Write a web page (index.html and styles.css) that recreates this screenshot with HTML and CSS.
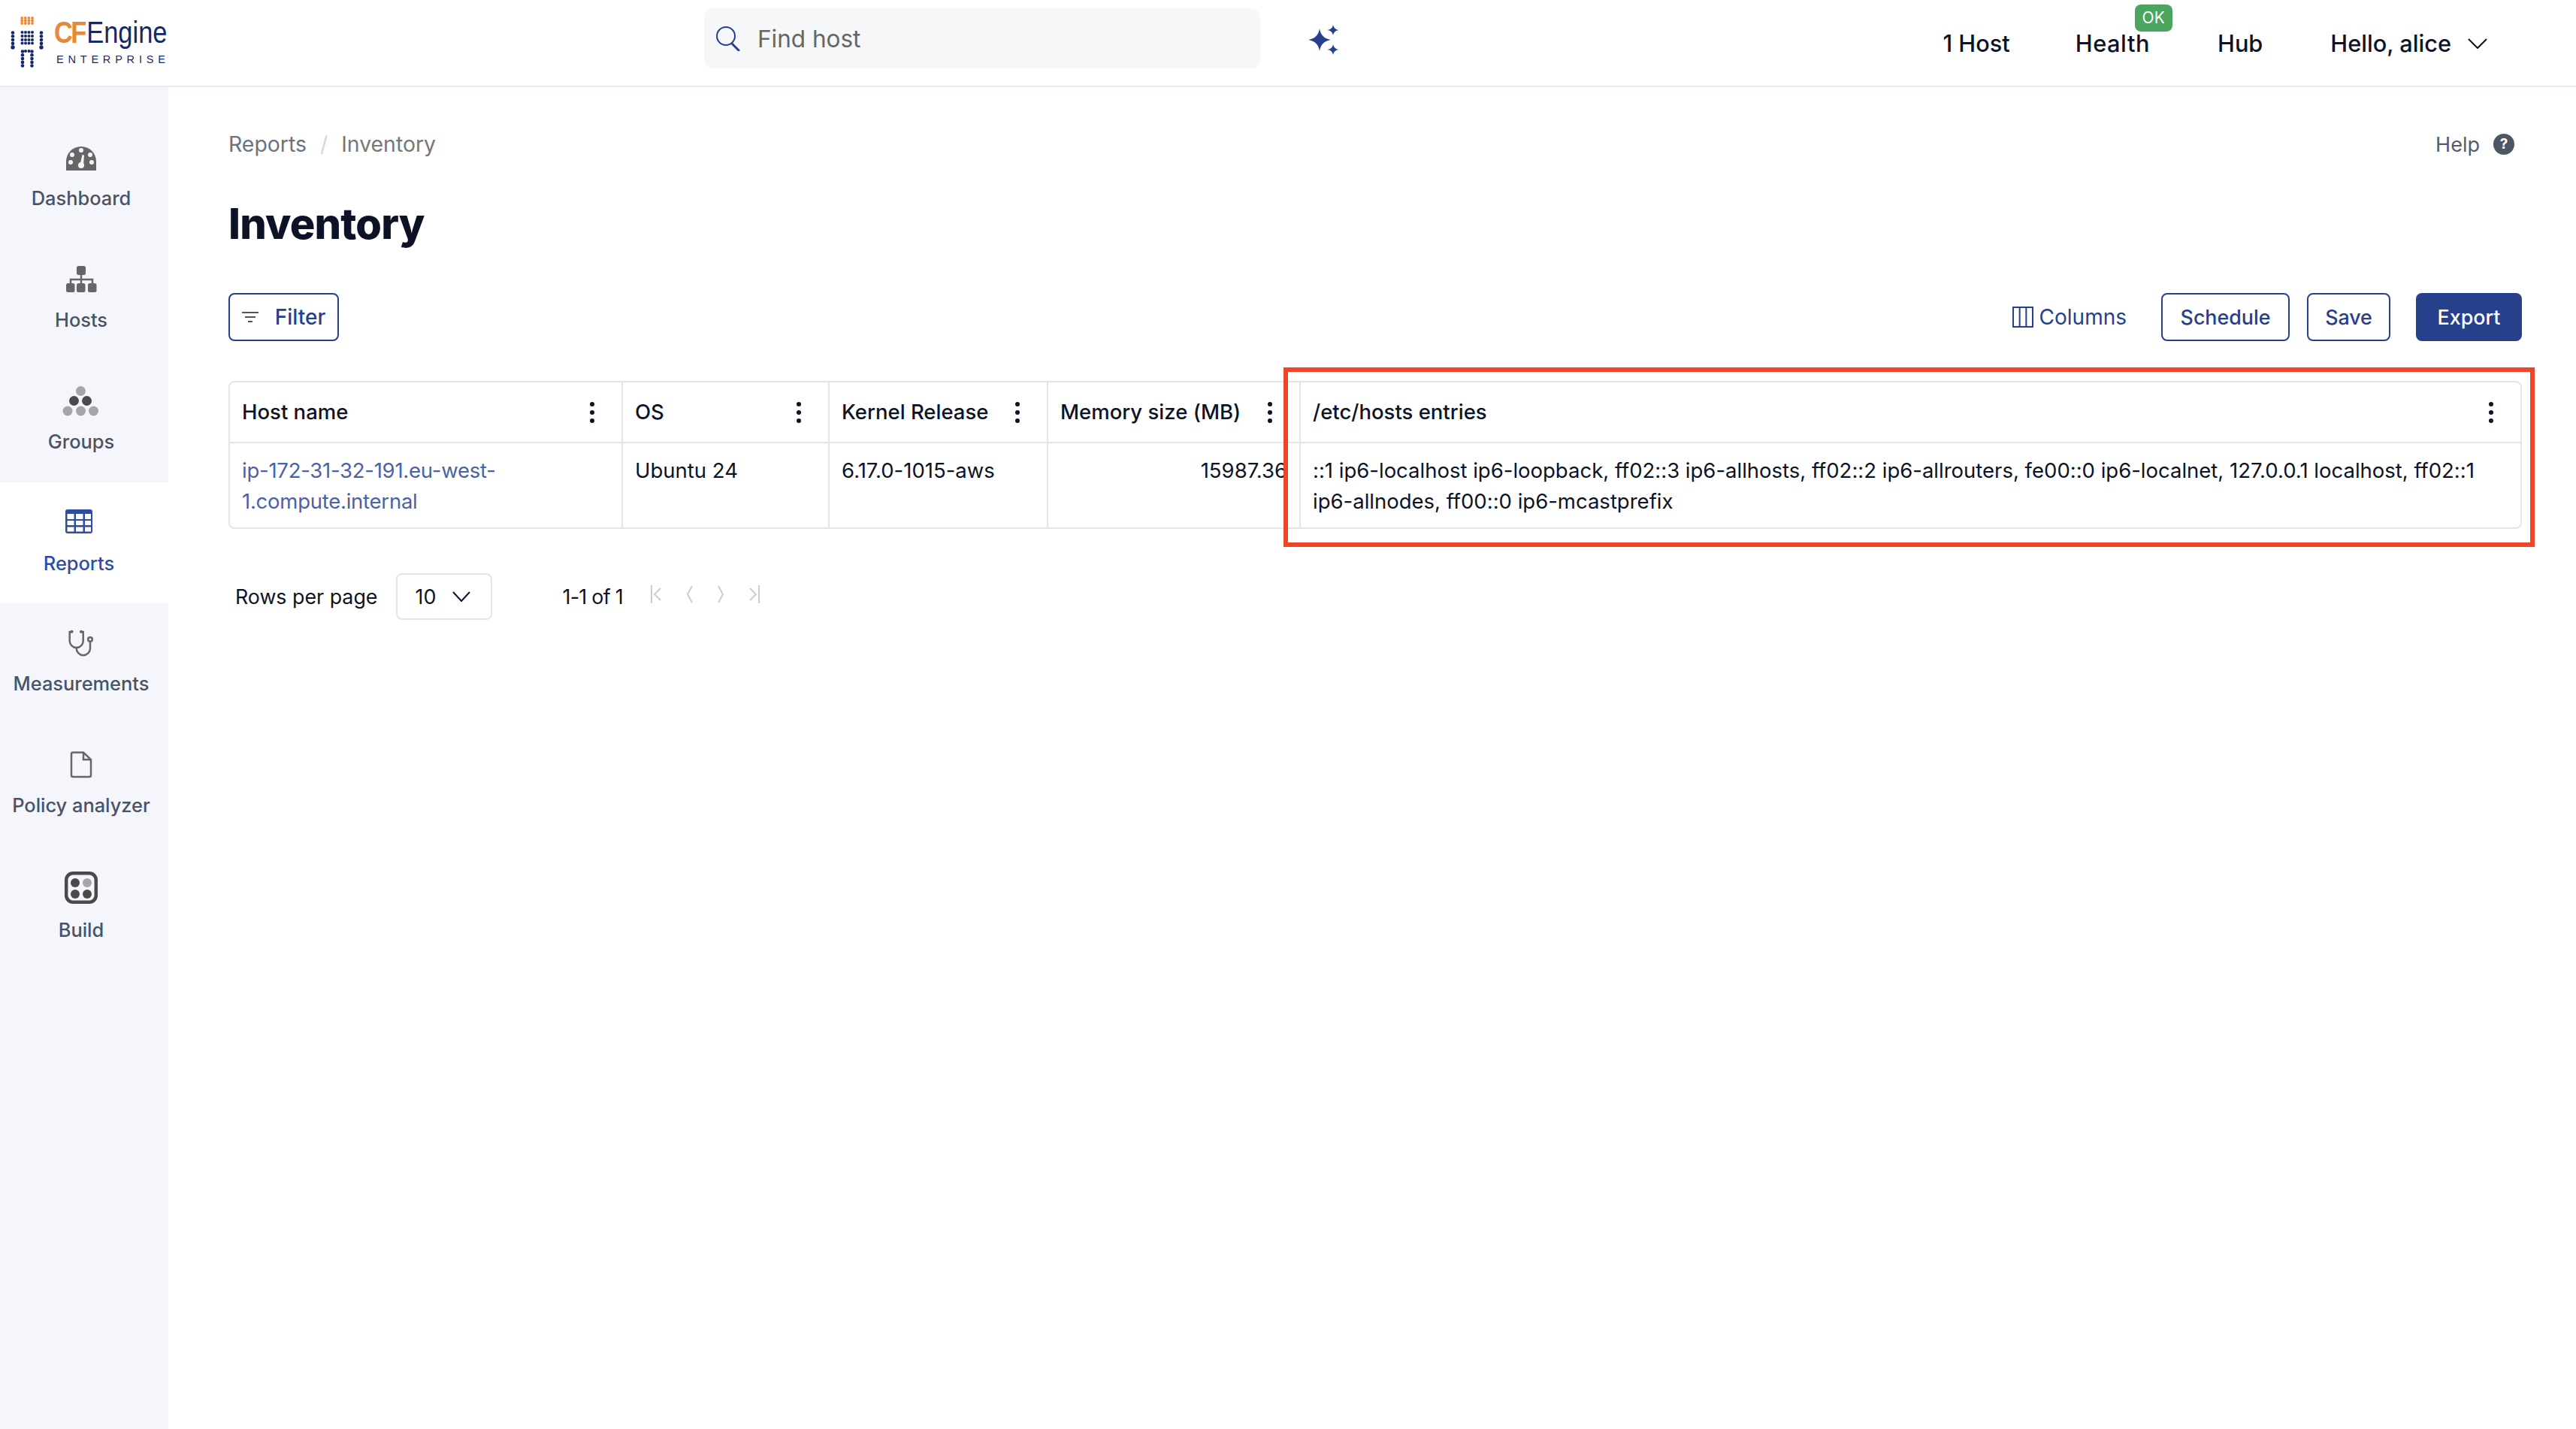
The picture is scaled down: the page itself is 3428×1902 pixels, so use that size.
FILE: index.html
```html
<!doctype html>
<html lang="en">
<head>
<meta charset="utf-8">
<title>Inventory</title>
<link rel="stylesheet" href="styles.css">
</head>
<body>
<div class="page">
  <header class="topbar">
    <div class="logo-wrap">
      <a class="logo">
        <svg class="logo-mark" viewBox="0 0 60 96" width="60" height="96">
          <g fill="#e8893a">
            <circle cx="15.200" cy="2" r="1.900"/><circle cx="19.800" cy="2" r="1.900"/><circle cx="24.400" cy="2" r="1.900"/><circle cx="29" cy="2" r="1.900"/>
            <circle cx="15.200" cy="5.500" r="1.900"/><circle cx="19.800" cy="5.500" r="1.900"/><circle cx="24.400" cy="5.500" r="1.900"/><circle cx="29" cy="5.500" r="1.900"/>
            <circle cx="15.200" cy="9" r="1.900"/><circle cx="19.800" cy="9" r="1.900"/><circle cx="24.400" cy="9" r="1.900"/><circle cx="29" cy="9" r="1.900"/>
          </g>
          <g fill="#14296b">
            <circle cx="3" cy="21.500" r="2.300"/><circle cx="3" cy="26.300" r="2.300"/><circle cx="3" cy="31.100" r="2.300"/><circle cx="3" cy="35.900" r="2.300"/><circle cx="3" cy="41" r="2.700"/>
            <circle cx="41" cy="21.500" r="2.300"/><circle cx="41" cy="26.300" r="2.300"/><circle cx="41" cy="31.100" r="2.300"/><circle cx="41" cy="35.900" r="2.300"/><circle cx="41" cy="41" r="2.700"/>
            <circle cx="15.500" cy="21" r="2"/><circle cx="20" cy="21" r="2"/><circle cx="24.500" cy="21" r="2"/><circle cx="29" cy="21" r="2"/>
            <circle cx="15.500" cy="26" r="2"/><circle cx="20" cy="26" r="2"/><circle cx="24.500" cy="26" r="2"/><circle cx="29" cy="26" r="2"/>
            <circle cx="15.500" cy="31" r="2"/><circle cx="20" cy="31" r="2"/><circle cx="24.500" cy="31" r="2"/><circle cx="29" cy="31" r="2"/>
            <circle cx="15.500" cy="35.500" r="2"/><circle cx="20" cy="35.500" r="2"/><circle cx="24.500" cy="35.500" r="2"/><circle cx="29" cy="35.500" r="2"/>
            <circle cx="20" cy="46" r="2"/><circle cx="24.500" cy="46" r="2"/>
            <circle cx="16" cy="46.500" r="2.300"/><circle cx="16" cy="51.300" r="2.300"/><circle cx="16" cy="56.100" r="2.300"/><circle cx="16" cy="60.900" r="2.300"/><circle cx="16" cy="65.500" r="2.300"/>
            <circle cx="28.500" cy="46.500" r="2.300"/><circle cx="28.500" cy="51.300" r="2.300"/><circle cx="28.500" cy="56.100" r="2.300"/><circle cx="28.500" cy="60.900" r="2.300"/><circle cx="28.500" cy="65.500" r="2.300"/>
          </g>
        </svg>
        <span class="logo-text">
          <span class="logo-name"><b class="logo-cf">CF</b>Engine</span>
          <span class="logo-sub">ENTERPRISE</span>
        </span>
      </a>
    </div>
    <div class="search">
      <svg class="search-icon" viewBox="0 0 34 34" width="34" height="34"><circle cx="14" cy="14" r="12" fill="none" stroke="#27408b" stroke-width="2"/><path d="M22 24l9 9" stroke="#27408b" stroke-width="3" stroke-linecap="round"/></svg>
      <span class="search-text">Find host</span>
    </div>
    <svg class="sparkle" viewBox="0 0 42 42" width="42" height="42" fill="#27408b">
      <path d="M16 6Q18 19 31 21 18 23 16 36 14 23 1 21 14 19 16 6Z"/>
      <path d="M34 1Q35 7 41.500 8 35 9 34 15 33 9 26.500 8 33 7 34 1Z"/>
      <path d="M34 27Q35 33 41.500 34 35 35 34 41 33 35 26.500 34 33 33 34 27Z"/>
    </svg>
    <nav class="topnav">
      <a class="topnav-item">1 Host</a>
      <a class="topnav-item topnav-health">Health<span class="badge-ok">OK</span></a>
      <a class="topnav-item">Hub</a>
      <a class="topnav-item topnav-user">Hello, alice
        <svg viewBox="0 0 26 14" width="26" height="14"><path d="M1 1l12 12L25 1" fill="none" stroke="#0d1326" stroke-width="2"/></svg>
      </a>
    </nav>
  </header>

  <div class="body-row">
    <aside class="sidebar">
      <a class="side-item">
        <svg class="side-icon" viewBox="0 0 64 48" width="64" height="48">
          <path d="M12 41V29a20 20 0 0 1 40 0V41Z" fill="#666"/>
          <g fill="#f4f6fb"><circle cx="32" cy="14" r="3"/><circle cx="20" cy="20" r="3"/><circle cx="44" cy="20" r="3"/><circle cx="18" cy="30" r="3"/><circle cx="46" cy="30" r="3"/><circle cx="32" cy="34" r="4"/><path d="M30.500 33L33.500 20 36 20.500 35 34Z"/></g>
        </svg>
        <span class="side-label">Dashboard</span>
      </a>
      <a class="side-item">
        <svg class="side-icon" viewBox="0 0 64 48" width="64" height="48">
          <g fill="#666"><rect x="26" y="6" width="12" height="12" rx="2.500"/><rect x="12" y="29" width="11.500" height="12" rx="2.500"/><rect x="26" y="29" width="11.500" height="12" rx="2.500"/><rect x="41" y="29" width="11.500" height="12" rx="2.500"/></g>
          <path d="M32 18V29M18 29V24H47V29" fill="none" stroke="#666" stroke-width="2.500"/>
        </svg>
        <span class="side-label">Hosts</span>
      </a>
      <a class="side-item">
        <svg class="side-icon" viewBox="0 0 64 48" width="64" height="48">
          <g fill="#a6a6a6"><circle cx="31.500" cy="10.500" r="6.500"/><circle cx="14" cy="37" r="6.500"/><circle cx="31.500" cy="37" r="6.500"/><circle cx="48.500" cy="37" r="6.500"/></g>
          <g fill="#4a4a4a"><circle cx="22.500" cy="23.500" r="6.500"/><circle cx="39.500" cy="23.500" r="6.500"/></g>
        </svg>
        <span class="side-label">Groups</span>
      </a>
      <a class="side-item side-item-active">
        <svg class="side-icon" viewBox="0 0 64 48" width="64" height="48">
          <rect x="14" y="6" width="36" height="32" rx="3" fill="#2e4da3"/>
          <g fill="#fff"><rect x="16.500" y="12" width="9" height="7"/><rect x="28" y="12" width="9.500" height="7"/><rect x="40" y="12" width="8" height="7"/><rect x="16.500" y="21" width="9" height="6"/><rect x="28" y="21" width="9.500" height="6"/><rect x="40" y="21" width="8" height="6"/><rect x="16.500" y="29.500" width="9" height="6"/><rect x="28" y="29.500" width="9.500" height="6"/><rect x="40" y="29.500" width="8" height="6"/></g>
        </svg>
        <span class="side-label">Reports</span>
      </a>
      <a class="side-item">
        <svg class="side-icon" viewBox="0 0 64 48" width="64" height="48">
          <g transform="translate(0 2)">
            <g fill="none" stroke="#666" stroke-width="2.500" stroke-linecap="round">
              <path d="M20 7H16.700V19a9 9 0 0 0 18 0V7H31.500"/>
              <path d="M25.700 28V29a9.150 9.150 0 0 0 18.300 0V20"/>
              <circle cx="44" cy="17" r="2.800"/>
            </g>
            <circle cx="19.500" cy="6.700" r="2" fill="#666"/><circle cx="32" cy="6.700" r="2" fill="#666"/>
          </g>
        </svg>
        <span class="side-label">Measurements</span>
      </a>
      <a class="side-item">
        <svg class="side-icon" viewBox="0 0 64 48" width="64" height="48">
          <path d="M21 7.500H35L45 17V38a2 2 0 0 1-2 2H21a2 2 0 0 1-2-2V9.500a2 2 0 0 1 2-2Z" fill="none" stroke="#666" stroke-width="2.500"/>
          <path d="M35 8V17H45" fill="none" stroke="#666" stroke-width="2.500"/>
        </svg>
        <span class="side-label">Policy analyzer</span>
      </a>
      <a class="side-item side-item-build">
        <svg class="side-icon" viewBox="0 0 64 48" width="64" height="48">
          <rect x="12.200" y="6.200" width="39.600" height="38.600" rx="9" fill="none" stroke="#4a4a4a" stroke-width="4.500"/>
          <circle cx="24" cy="19" r="6" fill="#4a4a4a"/><circle cx="40" cy="19" r="6" fill="#a6a6a6"/><circle cx="24" cy="34" r="6" fill="#4a4a4a"/><circle cx="40" cy="34" r="6" fill="#4a4a4a"/>
        </svg>
        <span class="side-label">Build</span>
      </a>
    </aside>

    <main class="main">
      <div class="crumb-row">
        <div class="crumbs"><a class="crumb-link">Reports</a><span class="crumb-sep">/</span><span class="crumb-current">Inventory</span></div>
        <a class="help">Help<span class="help-icon">?</span></a>
      </div>
      <h1 class="title">Inventory</h1>
      <div class="actions">
        <button class="btn btn-outline btn-filter">
          <svg viewBox="0 0 22 14" width="22" height="14"><path d="M0 1h22M4 7h14M8 13h6" stroke="#555" stroke-width="2"/></svg>
          Filter
        </button>
        <div class="actions-right">
          <a class="columns-link">
            <svg viewBox="0 0 28 28" width="28" height="28"><path d="M1 1h26v26H1ZM9.670 1v26M18.330 1v26" fill="none" stroke="#27408b" stroke-width="2"/></svg>
            Columns
          </a>
          <button class="btn btn-outline btn-schedule">Schedule</button>
          <button class="btn btn-outline btn-save">Save</button>
          <button class="btn btn-solid">Export</button>
        </div>
      </div>

      <table class="report">
        <colgroup>
          <col class="col-host"><col class="col-os"><col class="col-kernel"><col class="col-mem"><col class="col-etc">
        </colgroup>
        <thead>
          <tr>
            <th><div class="th-in">Host name<svg class="kebab" viewBox="0 0 6 28" width="6" height="28"><circle cx="3" cy="3" r="3"/><circle cx="3" cy="14" r="3"/><circle cx="3" cy="25" r="3"/></svg></div></th>
            <th><div class="th-in">OS<svg class="kebab" viewBox="0 0 6 28" width="6" height="28"><circle cx="3" cy="3" r="3"/><circle cx="3" cy="14" r="3"/><circle cx="3" cy="25" r="3"/></svg></div></th>
            <th><div class="th-in">Kernel Release<svg class="kebab" viewBox="0 0 6 28" width="6" height="28"><circle cx="3" cy="3" r="3"/><circle cx="3" cy="14" r="3"/><circle cx="3" cy="25" r="3"/></svg></div></th>
            <th><div class="th-in">Memory size (MB)<svg class="kebab" viewBox="0 0 6 28" width="6" height="28"><circle cx="3" cy="3" r="3"/><circle cx="3" cy="14" r="3"/><circle cx="3" cy="25" r="3"/></svg></div></th>
            <th><div class="th-in">/etc/hosts entries<svg class="kebab" viewBox="0 0 6 28" width="6" height="28"><circle cx="3" cy="3" r="3"/><circle cx="3" cy="14" r="3"/><circle cx="3" cy="25" r="3"/></svg></div></th>
          </tr>
        </thead>
        <tbody>
          <tr>
            <td><a class="host-link">ip-172-31-32-191.eu-west-1.compute.internal</a></td>
            <td>Ubuntu 24</td>
            <td>6.17.0-1015-aws</td>
            <td class="num">15987.36</td>
            <td>::1 ip6-localhost ip6-loopback, ff02::3 ip6-allhosts, ff02::2 ip6-allrouters, fe00::0 ip6-localnet, 127.0.0.1 localhost, ff02::1 ip6-allnodes, ff00::0 ip6-mcastprefix</td>
          </tr>
        </tbody>
      </table>

      <div class="pager">
        <span class="pager-label">Rows per page</span>
        <div class="select">10<svg viewBox="0 0 24 14" width="24" height="14"><path d="M1 1l11 12L23 1" fill="none" stroke="#0d1326" stroke-width="2"/></svg></div>
        <span class="pager-count">1-1 of 1</span>
        <div class="pager-icons">
          <svg viewBox="0 0 14 24" width="14" height="24"><path d="M1 0V24M13 4L5 12l8 8" fill="none" stroke="#ccc" stroke-width="2"/></svg>
          <svg viewBox="0 0 9 24" width="9" height="24"><path d="M8 1L2 12l6 11" fill="none" stroke="#ccc" stroke-width="2"/></svg>
          <svg viewBox="0 0 9 24" width="9" height="24"><path d="M1 1l6 11L1 23" fill="none" stroke="#ccc" stroke-width="2"/></svg>
          <svg viewBox="0 0 14 24" width="14" height="24"><path d="M13 0V24M1 4l8 8-8 8" fill="none" stroke="#ccc" stroke-width="2"/></svg>
        </div>
      </div>
    </main>
  </div>
  <div class="annotation"></div>
</div>
</body>
</html>
```
FILE: styles.css
```css
* { box-sizing: border-box; }
html, body { margin: 0; padding: 0; background: #fff; }
body { font-family: Inter, "Noto Sans", sans-serif; color: #0d1326; font-feature-settings: "calt" 0; }
.page { position: relative; width: 3428px; height: 1902px; overflow: hidden; display: flex; flex-direction: column; }

/* top bar */
.topbar { display: flex; align-items: flex-start; height: 116px; flex: none; border-bottom: 2px solid #e6eaf2; }
.logo-wrap { width: 937px; flex: none; }
.logo { display: flex; padding: 22px 0 0 14px; }
.logo-mark { flex: none; }
.logo-text { display: flex; flex-direction: column; margin: 1px 0 0 -2px; }
.logo-name { font-family: "Liberation Sans", sans-serif; font-size: 40px; line-height: 40px; color: #14296b; font-weight: 400; white-space: nowrap; transform: scaleX(.86); transform-origin: left center; }
.logo-cf { color: #e8893a; font-weight: 700; letter-spacing: -3px; margin-right: 3px; }
.logo-sub { font-size: 14.500px; line-height: 16px; letter-spacing: 5.800px; color: #14296b; margin: 8px 0 0 3px; font-family: "Liberation Sans", sans-serif; white-space: nowrap; }
.search { width: 740px; height: 80px; margin-top: 11px; background: #f6f7f9; border-radius: 12px; display: flex; align-items: center; padding-left: 15px; flex: none; }
.search-text { font-size: 31.500px; color: #666; margin-left: 22px; }
.sparkle { margin: 32px 0 0 63px; flex: none; }
.topnav { margin-left: auto; padding: 38px 118px 0 0; display: flex; gap: 90px; }
.topnav-item { font-size: 30.700px; line-height: 40px; font-weight: 500; position: relative; white-space: nowrap; }
.topnav-health { letter-spacing: .6px; margin-left: -3px; }
.topnav-user { display: flex; align-items: center; gap: 22px; }
.badge-ok { position: absolute; left: 79px; top: -32px; width: 50px; height: 36px; border-radius: 8px; background: #4ca55f; color: #fff; font-size: 21px; line-height: 36px; font-weight: 400; letter-spacing: 0; text-align: center; }

/* layout */
.body-row { display: flex; flex: 1; min-height: 0; }
.sidebar { width: 224px; flex: none; background: #f4f6fb; padding-top: 40px; display: flex; flex-direction: column; gap: 2px; }
.side-item { height: 160px; padding: 30px 8px 0 0; display: flex; flex-direction: column; align-items: center; flex: none; color: #4b5263; }
.side-item-active { background: #fff; padding-right: 14px; color: #2e4da3; margin-bottom: -2px; }
.side-icon { display: block; flex: none; }
.side-label { margin-top: 12px; font-size: 25.400px; line-height: 36px; font-weight: 500; white-space: nowrap; }
.side-item-build .side-label { margin-top: 16px; }

.main { flex: 1; padding: 58px 72px 0 80px; min-width: 0; }
.crumb-row { display: flex; justify-content: space-between; align-items: center; height: 36px; }
.crumbs { display: flex; align-items: center; font-size: 28.400px; line-height: 36px; color: #6b7280; }
.crumb-sep { color: #d0d7e5; margin: 0 18px; }
.crumb-current { color: #777; }
.help { display: flex; align-items: center; gap: 18px; font-size: 27px; color: #555b6e; padding-right: 10px; }
.help-icon { width: 28px; height: 28px; border-radius: 50%; background: #4e5565; color: #fff; font-size: 19px; font-weight: 700; line-height: 28px; text-align: center; }
.title { margin: 53px 0 0; font-size: 56px; line-height: 70px; font-weight: 800; color: #0d1326; letter-spacing: -0.800px; }

.actions { display: flex; justify-content: space-between; align-items: center; margin-top: 57px; height: 64px; }
.actions-right { display: flex; align-items: center; }
.btn { height: 64px; border-radius: 8px; font-family: inherit; font-size: 26.800px; font-weight: 500; display: flex; align-items: center; justify-content: center; padding: 0; }
.btn-outline { background: #fff; border: 2.500px solid #27408b; color: #27408b; }
.btn-solid { background: #27408b; border: 0; color: #fff; width: 141px; margin-left: 34px; }
.btn-filter { width: 147px; gap: 22px; font-size: 28px; }
.btn-schedule { width: 171px; margin-left: 46px; }
.btn-save { width: 111px; margin-left: 23px; }
.columns-link { display: flex; align-items: center; gap: 8px; color: #27408b; font-size: 28px; font-weight: 400; }

/* table */
.report { margin-top: 53px; width: 3052px; table-layout: fixed; border-collapse: separate; border-spacing: 0; border: 2px solid #e5e5e5; border-radius: 8px; font-size: 27.500px; line-height: 41px; }
.col-host { width: 521px; }
.col-os { width: 275px; }
.col-kernel { width: 291px; }
.col-mem { width: 336px; }
.col-etc { width: auto; }
.report th { height: 81px; padding: 0 36px 0 16px; font-weight: 500; text-align: left; border-left: 2px solid #e5e5e5; border-bottom: 2px solid #e5e5e5; }
.report td { padding: 16px 16px 14px; vertical-align: top; font-weight: 400; border-left: 2px solid #e5e5e5; }
.report th:first-child, .report td:first-child { border-left: 0; }
.th-in { display: flex; justify-content: space-between; align-items: center; white-space: nowrap; }
.kebab { fill: #0d1326; flex: none; }
.report td.num { text-align: right; }
.host-link { color: #4a62a8; letter-spacing: -.25px; }

/* pager */
.pager { display: flex; align-items: center; margin-top: 59px; padding-left: 9px; font-size: 26.800px; height: 62px; }
.select { width: 128px; height: 62px; margin-left: 25px; border: 2px solid #e5e5e5; border-radius: 8px; display: flex; align-items: center; padding-left: 23px; gap: 22px; }
.pager-count { margin-left: 93px; white-space: nowrap; letter-spacing: -.7px; }
.pager-icons { display: flex; align-items: center; margin-left: 37px; gap: 33px; margin-top: -6px; }

/* review annotation drawn over the table */
.annotation { position: absolute; left: 1708px; top: 489px; width: 1665px; height: 239px; border: 6px solid #ee4428; pointer-events: none; }
```
